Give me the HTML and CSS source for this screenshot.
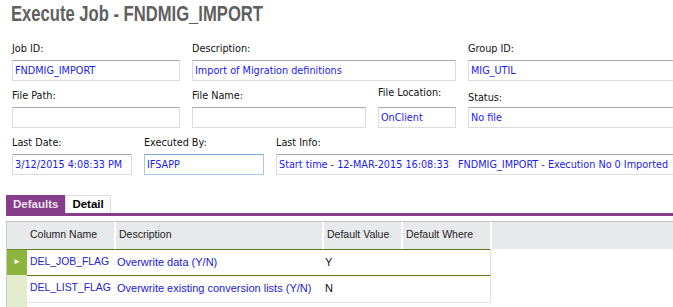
FILE: index.html
```html
<!DOCTYPE html>
<html lang="en">
<head>
    <meta charset="UTF-8">
    <title>Execute Job - FNDMIG_IMPORT</title>
    <link rel="stylesheet" href="styles.css">
</head>
<body>
    <div class="page">
        <h1 class="title"><span>Execute Job - FNDMIG_IMPORT</span></h1>

        <div class="form">
            <div class="row">
                <div class="field w168">
                    <label>Job ID:</label>
                    <div class="input">FNDMIG_IMPORT</div>
                </div>
                <div class="field w264">
                    <label>Description:</label>
                    <div class="input">Import of Migration definitions</div>
                </div>
                <div class="field w260">
                    <label>Group ID:</label>
                    <div class="input">MIG_UTIL</div>
                </div>
            </div>

            <div class="row">
                <div class="field w168">
                    <label>File Path:</label>
                    <div class="input"></div>
                </div>
                <div class="field w174">
                    <label>File Name:</label>
                    <div class="input"></div>
                </div>
                <div class="field w78">
                    <label class="up">File Location:</label>
                    <div class="input">OnClient</div>
                </div>
                <div class="field w260">
                    <label class="down">Status:</label>
                    <div class="input">No file</div>
                </div>
            </div>

            <div class="row">
                <div class="field w120">
                    <label>Last Date:</label>
                    <div class="input">3/12/2015 4:08:33 PM</div>
                </div>
                <div class="field w120">
                    <label>Executed By:</label>
                    <div class="input focus">IFSAPP</div>
                </div>
                <div class="field w420">
                    <label>Last Info:</label>
                    <div class="input">Start time - 12-MAR-2015 16:08:33&nbsp;&nbsp;&nbsp;FNDMIG_IMPORT - Execution No 0 Imported</div>
                </div>
            </div>
        </div>

        <div class="tabs">
            <span class="tab active">Defaults</span>
            <span class="tab">Detail</span>
        </div>

        <div class="grid">
            <div class="grid-head">
                <div class="gutter-head"></div>
                <div class="cell c-name">Column Name</div>
                <div class="cell c-desc">Description</div>
                <div class="cell c-val">Default Value</div>
                <div class="cell c-where">Default Where</div>
                <div class="cell c-rest"></div>
            </div>

            <div class="grid-body">
                <div class="gutter">
                    <div class="gutter-cell current">&#9658;</div>
                    <div class="gutter-cell"></div>
                </div>
                <div class="rows">
                    <div class="grid-row">
                        <div class="cell c-name link">DEL_JOB_FLAG</div>
                        <div class="cell c-desc link">Overwrite data (Y/N)</div>
                        <div class="cell c-val">Y</div>
                        <div class="cell c-where"></div>
                    </div>
                    <div class="grid-row last">
                        <div class="cell c-name link">DEL_LIST_FLAG</div>
                        <div class="cell c-desc link">Overwrite existing conversion lists (Y/N)</div>
                        <div class="cell c-val">N</div>
                        <div class="cell c-where"></div>
                    </div>
                </div>
            </div>
        </div>
    </div>
</body>
</html>
```

FILE: styles.css
```css
* {
    margin: 0px;
    padding: 0px;
    box-sizing: border-box;
}

html, body {
    background-color: #fff;
    overflow: hidden;
}

body {
    font-family: "DejaVu Sans Condensed", "DejaVu Sans", sans-serif;
    font-size: 10.75px;
    color: #111;
}

.page {
    width: 900px;
}

/* page heading - narrow bold face, squeezed from Arial bold */
.title {
    font-family: "Liberation Sans", Arial, sans-serif;
    font-weight: bold;
    font-size: 22px;
    line-height: 24px;
    color: #606060;
    padding: 2px 0 0 11px;
    height: 41px;
    white-space: nowrap;
}

.title span {
    display: inline-block;
    transform: scaleX(0.755);
    transform-origin: left center;
}

/* form fields */
.form {
    padding-left: 12px;
    display: flex;
    flex-direction: column;
    gap: 7px;
}

.row {
    display: flex;
    gap: 12px;
}

.field {
    display: flex;
    flex-direction: column;
}

.field label {
    display: block;
    height: 16px;
    line-height: 16px;
    margin-bottom: 3px;
}

.field label.up {
    position: relative;
    top: -3px;
}

.field label.down {
    position: relative;
    top: 2px;
}

.w78 { width: 78px; }
.w120 { width: 120px; }
.w168 { width: 168px; }
.w174 { width: 174px; }
.w264 { width: 264px; }
.w260 { width: 260px; }
.w420 { width: 420px; }

.input {
    height: 21px;
    line-height: 19px;
    padding: 0 2px;
    border: 1px solid #dcdcdc;
    border-top-color: #ababab;
    color: #1a1aee;
    white-space: nowrap;
    overflow: hidden;
}

.input.focus {
    border-color: #a6c8ea;
    border-top-color: #7fa9d8;
}

/* tabs */
.tabs {
    margin: 20px 0 0 6px;
    display: flex;
    border-bottom: 3px solid #873e8a;
    height: 21px;
}

.tab {
    font-family: "Liberation Sans", Arial, sans-serif;
    font-weight: bold;
    font-size: 11.5px;
    line-height: 17px;
    padding: 0 6px;
    border: 1px solid #ddd;
    border-bottom: none;
    color: #000;
}

.tab.active {
    background-color: #873e8a;
    border-color: #873e8a;
    color: #ece4ee;
}

/* grid */
.grid {
    margin: 5px 0 0 6px;
    border-left: 1px solid #c8c8c8;
    font-family: "Liberation Sans", Arial, sans-serif;
    font-size: 11px;
}

.grid-head {
    display: flex;
    height: 28px;
    background-color: #e8e9eb;
    border-top: 1px solid #c4c4c4;
    color: #222;
    font-size: 10.5px;
}

.gutter-head {
    width: 20px;
}

.cell {
    padding-left: 3px;
    line-height: 25px;
    white-space: nowrap;
}

.grid-head .cell {
    border-left: 2px solid #fff;
}

.grid-head .c-name {
    border-left: none;
}

.c-name { width: 87px; }
.c-desc { width: 208px; }
.c-val { width: 79px; }
.c-where { width: 89px; }
.c-rest { flex: 1; }

.grid-body {
    display: flex;
    height: 70px;
}

.gutter {
    width: 20px;
    background-color: #e3ebcd;
}

.gutter-cell {
    height: 26px;
    border-top: 1px solid #e3ebcd;
}

.gutter-cell.current {
    background-color: #8db43c;
    border-top-color: #6d8f22;
    color: #fff;
    font-size: 8px;
    line-height: 24px;
    text-align: center;
}

.rows {
    width: 464px;
}

.grid-row {
    display: flex;
    height: 26px;
    border-top: 1px solid #5b7c16;
    border-right: 1px solid #e2e2e2;
}

.grid-row.last {
    border-bottom: 1px solid #e2e2e2;
    height: 28px;
}

.grid-row .cell {
    line-height: 24px;
    color: #111;
}

.grid-row .c-name {
    font-size: 10.4px;
}

.grid-row .link {
    color: #2020d8;
}
```
